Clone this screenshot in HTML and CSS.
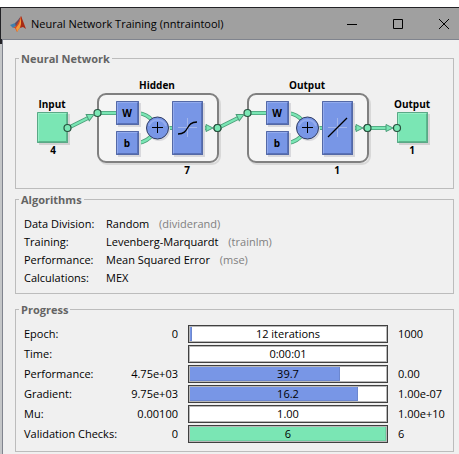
FILE: index.html
```html
<!DOCTYPE html>
<html lang="en">
<head>
<meta charset="utf-8">
<title>Neural Network Training (nntraintool)</title>
<link rel="stylesheet" href="styles.css">
</head>
<body>
<main class="window">
  <header class="titlebar">
    <svg class="app-icon" viewBox="0 0 16 16" aria-hidden="true">
      <path d="M0 9 5 7 7 9 3 12z" fill="#3f7fae"/>
      <path d="M5 7 8 4 11 0 8 9 6 11z" fill="#6a4a5c"/>
      <path d="M3 12 6 10 9 5 11 0 12 3 11 10 7 16 5 12z" fill="#d9481f"/>
      <path d="M6 12 9 8 11 2 11 10 7 16z" fill="#f39a3a"/>
      <path d="M11 0 13 5 16 13 13 11 10 12 11 8z" fill="#a82a14"/>
    </svg>
    <h1 class="title">Neural Network Training (nntraintool)</h1>
    <div class="controls">
      <button type="button" class="control" aria-label="Minimize"><svg viewBox="0 0 10 10"><path d="M0 5.5H10"/></svg></button>
      <button type="button" class="control" aria-label="Maximize"><svg viewBox="0 0 10 10"><path d="M.5 .5H9.5V9.5H.5z"/></svg></button>
      <button type="button" class="control" aria-label="Close"><svg viewBox="0 0 10 10"><path d="M0 0 10 10M10 0 0 10"/></svg></button>
    </div>
  </header>

  <div class="content">
    <fieldset class="panel">
      <legend>Neural Network</legend>
      <svg class="diagram" viewBox="16 67 437 121" role="img" aria-label="Network diagram">
        <defs>
          <g id="link-head"><path d="M-7-3.500 0 0-7 3.500z" fill="#7ae6b4" stroke="#4a9c78" stroke-width="1"/></g>
          <circle id="port" r="3.500" fill="#7ae6b4" stroke="#28503e" stroke-width="1.200"/>
          <g id="terminal">
            <path d="M2 2H33V33H2z" fill="#d2d2d2"/>
            <path d="M0 0H31V31H0z" fill="#7ae6b4"/>
            <path d="M0 31V0H31L29 2H2V29z" fill="#96efc6"/>
            <path d="M31 0V31H0L2 29H29V2z" fill="#5cb68d"/>
            <path d="M.5.5H30.500V30.500H.5z" fill="none" stroke="#5aa886"/>
          </g>
          <g id="block">
            <path d="M2 2H25V26H2z" fill="#d8d8dc"/>
            <path d="M0 0H23V24H0z" fill="#7896e6"/>
            <path d="M0 24V0H23L21 2H2V22z" fill="#93abed"/>
            <path d="M23 0V24H0L2 22H21V2z" fill="#5871b8"/>
            <path d="M.5.5H22.500V23.500H.5z" fill="none" stroke="#5469a6"/>
          </g>
          <g id="layer">
            <rect x="99" y="96" width="121" height="68" rx="8" fill="none" stroke="#d8d8d8" stroke-width="2"/>
            <rect x="98" y="94" width="120" height="68" rx="8" fill="#f5f5f5" stroke="#808080" stroke-width="2"/>
            <g fill="none" stroke="#4a9c78" stroke-width="4">
              <path d="M98 113H117M138 113Q147 114 153 121M138 143Q147 142 153 134M167 128H173M202 128H208"/>
              <path stroke="#7ae6b4" stroke-width="2.500" d="M98 113H117M138 113Q147 114 153 121M138 143Q147 142 153 134M167 128H173M202 128H208"/>
            </g>
            <use href="#link-head" x="213" y="128"/>
            <use href="#block" x="116" y="101"/>
            <use href="#block" x="116" y="131"/>
            <text x="127" y="117">W</text>
            <text x="127" y="147">b</text>
            <circle cx="159" cy="130" r="11" fill="#d8d8dc"/>
            <circle cx="157.500" cy="128" r="11" fill="#7896e6" stroke="#303c62"/>
            <path d="M149 126A9 9 0 0 1 166 126" fill="none" stroke="#93abed" stroke-width="2"/>
            <path d="M152 127.500H163M157.500 122V133" fill="none" stroke="#000"/>
            <path d="M174 103H205V157H174z" fill="#d8d8dc"/>
            <path d="M172 101H203V155H172z" fill="#7896e6"/>
            <path d="M172 155V101H203L201 103H174V153z" fill="#93abed"/>
            <path d="M203 101V155H172L174 153H201V103z" fill="#5871b8"/>
            <path d="M172.500 101.500H202.500V154.500H172.500z" fill="none" stroke="#5469a6"/>
            <path d="M178 127.500H197M187.500 118V137" fill="none" stroke="#a2b5ea"/>
            <use href="#port" x="97.500" y="113"/>
            <use href="#port" x="217.500" y="128"/>
          </g>
        </defs>
        <use href="#terminal" x="37" y="112"/>
        <use href="#terminal" x="397" y="112"/>
        <use href="#layer"/>
        <use href="#layer" x="150"/>
        <g fill="none" stroke="#4a9c78" stroke-width="4">
          <path d="M68 128 88 118M218 128 238 118M368 128H386"/>
          <path stroke="#7ae6b4" stroke-width="2.500" d="M68 128 88 118M218 128 238 118M368 128H386"/>
        </g>
        <use href="#link-head" transform="translate(94 114.500) rotate(-26)"/>
        <use href="#link-head" transform="translate(244 114.500) rotate(-26)"/>
        <use href="#link-head" x="393" y="128"/>
        <use href="#port" x="67.500" y="128"/>
        <use href="#port" x="217.500" y="128"/>
        <use href="#port" x="367.500" y="128"/>
        <use href="#port" x="397" y="128"/>
        <path d="M178 134C190 134 185 122 197 122" fill="none" stroke="#000" stroke-width="1.300"/>
        <path d="M328 137 347 118" fill="none" stroke="#000" stroke-width="1.200"/>
        <text x="52" y="108">Input</text>
        <text x="53" y="154">4</text>
        <text x="157" y="89">Hidden</text>
        <text x="187" y="174">7</text>
        <text x="307" y="89">Output</text>
        <text x="337" y="174">1</text>
        <text x="412" y="108">Output</text>
        <text x="412" y="154">1</text>
      </svg>
    </fieldset>

    <fieldset class="panel algorithms">
      <legend>Algorithms</legend>
      <dl class="facts">
        <dt>Data Division:</dt><dd>Random <span class="fn">(dividerand)</span></dd>
        <dt>Training:</dt><dd>Levenberg-Marquardt <span class="fn">(trainlm)</span></dd>
        <dt>Performance:</dt><dd>Mean Squared Error <span class="fn">(mse)</span></dd>
        <dt>Calculations:</dt><dd>MEX</dd>
      </dl>
    </fieldset>

    <fieldset class="panel progress">
      <legend>Progress</legend>
      <table class="meters">
        <tr><th scope="row">Epoch:</th><td class="from">0</td><td><div class="bar"><div class="fill" style="width:1.2%"></div><span class="value">12 iterations</span></div></td><td class="to">1000</td></tr>
        <tr><th scope="row">Time:</th><td class="from"></td><td><div class="bar"><span class="value">0:00:01</span></div></td><td class="to"></td></tr>
        <tr><th scope="row">Performance:</th><td class="from">4.75e+03</td><td><div class="bar"><div class="fill" style="width:76%"></div><span class="value">39.7</span></div></td><td class="to">0.00</td></tr>
        <tr><th scope="row">Gradient:</th><td class="from">9.75e+03</td><td><div class="bar"><div class="fill" style="width:85%"></div><span class="value">16.2</span></div></td><td class="to">1.00e-07</td></tr>
        <tr><th scope="row">Mu:</th><td class="from">0.00100</td><td><div class="bar"><span class="value">1.00</span></div></td><td class="to">1.00e+10</td></tr>
        <tr><th scope="row">Validation Checks:</th><td class="from">0</td><td><div class="bar"><div class="fill done"></div><span class="value">6</span></div></td><td class="to">6</td></tr>
      </table>
    </fieldset>
  </div>
</main>
</body>
</html>
```
FILE: styles.css
```css
* { box-sizing: border-box; }

body {
  margin: 0;
  padding-top: 7px;
  background: #fff;
  color: #000;
  font: 11px/18px "Open Sans", "Noto Sans", sans-serif;
  overflow: hidden;
}

.window {
  min-height: calc(100vh - 7px);
  display: flex;
  flex-direction: column;
  border-top: 1px solid #222226;
  background: linear-gradient(#222226 36px, #c4c6c8 36px);
}

.titlebar {
  display: flex;
  align-items: center;
  height: 31px;
  margin-left: 1px;
  padding-left: 9px;
  background: #a0a0a0;
}

.app-icon { width: 16px; height: 16px; }

.title {
  flex: 1;
  margin: 0 0 0 5px;
  font-size: 11px;
  font-weight: 400;
  white-space: nowrap;
}

.controls { display: flex; margin-right: -8px; }

.control {
  display: flex;
  align-items: center;
  justify-content: center;
  width: 46px;
  height: 31px;
  padding: 0;
  border: 0;
  background: none;
}

.control svg {
  width: 10px;
  height: 10px;
  fill: none;
  stroke: #000;
}

.content {
  flex: 1;
  margin-left: 2px;
  padding: 10px 5px 0 12px;
  border: solid #80848e;
  border-width: 1px 0 0 1px;
  background: #f0f0f0;
}

.panel {
  min-width: 0;
  margin: 0;
  padding: 0 8px;
  border: 1px solid #bcbcbc;
}

.panel legend {
  margin-left: -5px;
  padding: 0 2px;
  color: #646464;
  font-weight: 700;
  line-height: 17px;
}

.diagram {
  display: block;
  width: calc(100% + 16px);
  height: 121px;
  margin: 0 -8px;
}

.diagram text {
  font-size: 10px;
  font-weight: 700;
  text-anchor: middle;
}

.algorithms { margin-top: 2px; padding: 7px 8px 6px; }

.facts {
  display: grid;
  grid-template-columns: 82px 1fr;
  margin: 0;
}

.facts dd { margin: 0; }

.fn { margin-left: 7px; color: #808080; }

.progress { margin-top: 7px; padding: 6px 8px 7px; }

.meters {
  width: 100%;
  table-layout: fixed;
  border-collapse: collapse;
}

.meters th, .meters td { height: 20px; padding: 0; }

.meters th {
  width: 100px;
  font-weight: 400;
  text-align: left;
  white-space: nowrap;
}

.meters .from { width: 64px; padding-right: 10px; text-align: right; }

.meters .to { width: 57px; padding-left: 10px; white-space: nowrap; }

.bar {
  display: grid;
  height: 18px;
  border: 1px solid #404040;
  background: #fff;
  box-shadow: inset 0 0 0 1px #b8b8b8;
  line-height: 16px;
}

.fill, .value { grid-area: 1 / 1; }

.fill {
  margin: 1px;
  background: #7896e6;
  border: solid #6c87cf;
  border-width: 0 1px 1px 0;
}

.fill.done {
  background: #7ae6b4;
  border-color: #6ecfa2;
}

.value { text-align: center; }
```
